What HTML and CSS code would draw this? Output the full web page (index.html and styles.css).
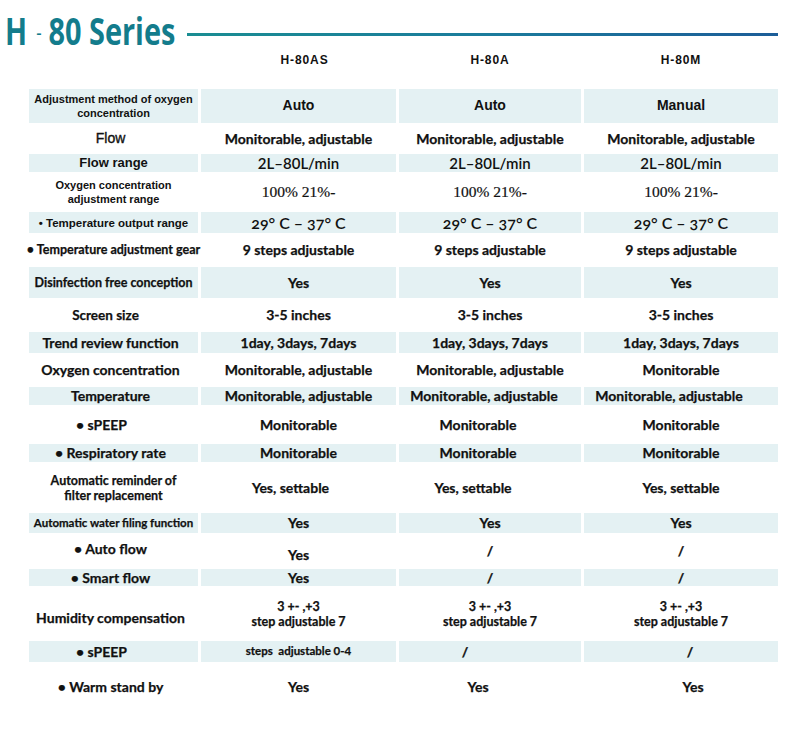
FILE: index.html
```html
<!DOCTYPE html>
<html lang="en">
<head>
<meta charset="utf-8">
<title>H-80 Series</title>
<link rel="stylesheet" href="styles.css">
</head>
<body>
<header class="title-bar">
  <h1 class="title"><span class="title-inner">H<span class="dash">-</span>80 Series</span></h1>
  <div class="rule"></div>
</header>

<div class="row heads">
  <div class="cell"></div>
  <div class="cell right10">H-80AS</div>
  <div class="cell">H-80A</div>
  <div class="cell">H-80M</div>
</div>

<section class="spec">
  <div class="row shade h34">
    <div class="cell lbl arial sm">Adjustment method of oxygen<br>concentration</div>
    <div class="cell val arial">Auto</div>
    <div class="cell val arial">Auto</div>
    <div class="cell val arial">Manual</div>
  </div>
  <div class="row h31">
    <div class="cell lbl arial md">Flow</div>
    <div class="cell val">Monitorable, adjustable</div>
    <div class="cell val">Monitorable, adjustable</div>
    <div class="cell val">Monitorable, adjustable</div>
  </div>
  <div class="row shade h18">
    <div class="cell lbl arial r13">Flow range</div>
    <div class="cell val semi">2L–80L/min</div>
    <div class="cell val semi">2L–80L/min</div>
    <div class="cell val semi">2L–80L/min</div>
  </div>
  <div class="row h40">
    <div class="cell lbl arial sm">Oxygen concentration<br>adjustment range</div>
    <div class="cell val serif">100% 21%-</div>
    <div class="cell val serif">100% 21%-</div>
    <div class="cell val serif">100% 21%-</div>
  </div>
  <div class="row shade h21">
    <div class="cell lbl arial sm wide">• Temperature output range</div>
    <div class="cell val semi big">29° C – 37° C</div>
    <div class="cell val semi big">29° C – 37° C</div>
    <div class="cell val semi big">29° C – 37° C</div>
  </div>
  <div class="row h34">
    <div class="cell lbl s12">• Temperature adjustment gear</div>
    <div class="cell val">9 steps adjustable</div>
    <div class="cell val">9 steps adjustable</div>
    <div class="cell val">9 steps adjustable</div>
  </div>
  <div class="row shade h31">
    <div class="cell lbl s12">Disinfection free conception</div>
    <div class="cell val">Yes</div>
    <div class="cell val">Yes</div>
    <div class="cell val">Yes</div>
  </div>
  <div class="row h34">
    <div class="cell lbl s13 left8">Screen size</div>
    <div class="cell val">3-5 inches</div>
    <div class="cell val">3-5 inches</div>
    <div class="cell val">3-5 inches</div>
  </div>
  <div class="row shade h21">
    <div class="cell lbl">Trend review function</div>
    <div class="cell val">1day, 3days, 7days</div>
    <div class="cell val">1day, 3days, 7days</div>
    <div class="cell val">1day, 3days, 7days</div>
  </div>
  <div class="row h34">
    <div class="cell lbl">Oxygen concentration</div>
    <div class="cell val">Monitorable, adjustable</div>
    <div class="cell val">Monitorable, adjustable</div>
    <div class="cell val">Monitorable</div>
  </div>
  <div class="row shade h18">
    <div class="cell lbl">Temperature</div>
    <div class="cell val">Monitorable, adjustable</div>
    <div class="cell val left6">Monitorable, adjustable</div>
    <div class="cell val left12">Monitorable, adjustable</div>
  </div>
  <div class="row h39">
    <div class="cell lbl left12">• sPEEP</div>
    <div class="cell val">Monitorable</div>
    <div class="cell val left12">Monitorable</div>
    <div class="cell val">Monitorable</div>
  </div>
  <div class="row shade h18">
    <div class="cell lbl">• Respiratory rate</div>
    <div class="cell val">Monitorable</div>
    <div class="cell val left12">Monitorable</div>
    <div class="cell val">Monitorable</div>
  </div>
  <div class="row h51">
    <div class="cell lbl s12 lh">Automatic reminder of<br>filter replacement</div>
    <div class="cell val left8">Yes, settable</div>
    <div class="cell val left16">Yes, settable</div>
    <div class="cell val">Yes, settable</div>
  </div>
  <div class="row shade h20">
    <div class="cell lbl s11">Automatic water filing function</div>
    <div class="cell val">Yes</div>
    <div class="cell val">Yes</div>
    <div class="cell val">Yes</div>
  </div>
  <div class="row h36">
    <div class="cell lbl up4">• Auto flow</div>
    <div class="cell val down4">Yes</div>
    <div class="cell val">/</div>
    <div class="cell val">/</div>
  </div>
  <div class="row shade h17">
    <div class="cell lbl">• Smart flow</div>
    <div class="cell val">Yes</div>
    <div class="cell val">/</div>
    <div class="cell val">/</div>
  </div>
  <div class="row h55">
    <div class="cell lbl down4">Humidity compensation</div>
    <div class="cell val s12 lh">3 +- ,+3<br>step adjustable 7</div>
    <div class="cell val s12 lh">3 +- ,+3<br>step adjustable 7</div>
    <div class="cell val s12 lh">3 +- ,+3<br>step adjustable 7</div>
  </div>
  <div class="row shade h21">
    <div class="cell lbl left12">• sPEEP</div>
    <div class="cell val s11">steps&nbsp; adjustable 0-4</div>
    <div class="cell val left48">/</div>
    <div class="cell val right18">/</div>
  </div>
  <div class="row h50">
    <div class="cell lbl">• Warm stand by</div>
    <div class="cell val">Yes</div>
    <div class="cell val left12">Yes</div>
    <div class="cell val right24">Yes</div>
  </div>
</section>
</body>
</html>
```

FILE: styles.css
```css
* { box-sizing: border-box; }

html, body {
  margin: 0;
  padding: 0;
  background: #ffffff;
}

body {
  width: 800px;
  height: 730px;
  overflow: hidden;
  color: #111;
  font-family: "Lato", "Open Sans", sans-serif;
}

/* ---------- title ---------- */
.title-bar {
  display: flex;
  padding: 10px 22px 0 5px;
  height: 50px;
}

.title {
  margin: 0;
  width: 182px;
  flex: none;
  font-family: "Open Sans", "Lato", sans-serif;
  font-weight: 700;
  font-size: 38px;
  line-height: 40px;
  color: #137c8c;
  white-space: nowrap;
}

.title-inner {
  display: inline-block;
  transform: scaleX(0.76);
  transform-origin: left center;
}

.dash {
  display: inline-block;
  font-size: 22px;
  font-weight: 400;
  vertical-align: 5px;
  margin: 0 9px 0 12px;
}

.rule {
  flex: 1;
  height: 3px;
  margin-top: 23px;
  background: linear-gradient(90deg, #1a8d92 0%, #1b7c9c 50%, #1c5d98 100%);
}

/* ---------- rows ---------- */
.row {
  display: grid;
  grid-template-columns: 169px 195px 182px 194px;
  column-gap: 3px;
  margin-left: 29px;
}

.heads {
  height: 20px;
  margin-bottom: 19px;
  font-family: "Liberation Sans", Arial, sans-serif;
  font-weight: 700;
  font-size: 12px;
  letter-spacing: 0.9px;
}

.cell {
  display: flex;
  align-items: center;
  justify-content: center;
  text-align: center;
  white-space: nowrap;
}

.shade .cell { background: #e4f1f3; }

.h17 { height: 17px; }
.h18 { height: 18px; }
.h20 { height: 20px; }
.h21 { height: 21px; }
.h31 { height: 31px; }
.h34 { height: 34px; }
.h36 { height: 36px; }
.h39 { height: 39px; }
.h40 { height: 40px; }
.h50 { height: 50px; }
.h51 { height: 51px; }
.h55 { height: 55px; }

/* ---------- labels & values ---------- */
.lbl {
  font-weight: 700;
  font-size: 14px;
  padding-right: 6px;
  line-height: 1.1;
  -webkit-text-stroke: 0.25px #111;
}

.val {
  font-weight: 700;
  font-size: 14px;
  line-height: 1.1;
  -webkit-text-stroke: 0.25px #111;
}

.arial { font-family: "Liberation Sans", Arial, sans-serif; -webkit-text-stroke: 0; }
.arial.sm { font-size: 11px; line-height: 14px; padding-right: 0; }
.arial.sm.wide { font-size: 11.5px; }
.arial.md { font-size: 14px; font-weight: 400; -webkit-text-stroke: 0.35px #111; }
.arial.r13 { font-size: 13px; padding-right: 0; }
.val.arial { font-size: 14px; }

.s11 { font-size: 11.5px; padding-right: 0; }
.s12 { font-size: 12.5px; padding-right: 0; }
.s13 { font-size: 13.5px; }
.lh { line-height: 15px; }

.semi { font-weight: 600; font-size: 15px; -webkit-text-stroke: 0; }
.semi.big { font-size: 16px; font-variant-numeric: oldstyle-nums; }

.serif {
  font-family: "Liberation Serif", "Times New Roman", serif;
  font-weight: 400;
  font-size: 15.5px;
  -webkit-text-stroke: 0.2px #111;
}

/* small positional nudges matching the source artwork */
.left6  { padding-right: 12px; }
.left8  { padding-right: 16px; }
.left12 { padding-right: 24px; }
.left16 { padding-right: 34px; }
.left48 { padding-right: 50px; }
.right10 { padding-left: 12px; }
.right18 { padding-left: 18px; }
.right24 { padding-left: 24px; }
.up4 { padding-bottom: 4px; }
.down4 { padding-top: 8px; }
```
